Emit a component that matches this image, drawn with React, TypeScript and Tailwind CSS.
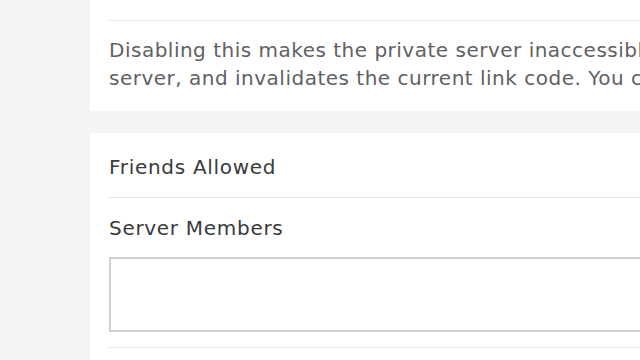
export default function App() {
  return (
    <main
      className="h-[360px] w-[640px] overflow-hidden bg-[#f2f4f5] pl-[90px] text-[#393b3d]"
      style={{ fontFamily: '"DejaVu Sans", "Liberation Sans", sans-serif' }}
    >
      <div className="w-[600px] -mt-[20px] bg-white px-[19px] pb-[19px]">
        <div className="h-[41px] border-b border-[#e8e7e3]" />
        <p className="mt-[15px] whitespace-nowrap text-[20px] leading-[28px] tracking-[0.5px] text-[#606162]">
          Disabling this makes the private server inaccessible to anyone without a link
          <br />
          server, and invalidates the current link code. You can generate a new one
        </p>
      </div>

      <div className="mt-[22px] w-[600px] bg-white px-[19px] pb-[40px] text-[20px] tracking-[0.7px]">
        <div className="flex h-[65px] items-center pt-[3px] border-b border-[#e5e5e5]">Friends Allowed</div>
        <div className="flex h-[59px] items-center pt-[1px]">Server Members</div>
        <div className="h-[75px] border-2 border-[#cfcfcf] bg-white" />
        <div className="mt-[15px] border-b border-[#e5e5e5]" />
      </div>
    </main>
  )
}
